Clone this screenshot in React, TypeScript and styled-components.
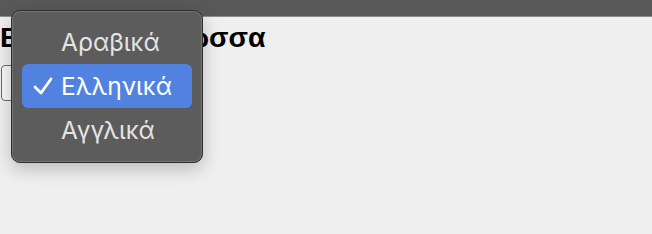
import React from 'react';
import styled, { createGlobalStyle } from 'styled-components';

const GlobalStyle = createGlobalStyle`
  html, body {
    margin: 0;
    padding: 0;
    background: #efefef;
    width: 652px;
    height: 234px;
    overflow: hidden;
  }
  * {
    box-sizing: border-box;
  }
`;

const Page = styled.div`
  position: relative;
  width: 652px;
  height: 234px;
  background: #efefef;
  font-family: "Liberation Sans", Arial, sans-serif;
`;

const TopBar = styled.div`
  height: 17px;
  background: #595959;
  border-bottom: 1px solid #8c8c8c;
`;

const Content = styled.div`
  display: flex;
  flex-direction: column;
  align-items: flex-start;
  padding: 0 0 0 1px;
`;

const Heading = styled.h1`
  margin: 3px 0 0 -1px;
  font-size: 28.5px;
  font-weight: 700;
  line-height: 34px;
  white-space: nowrap;
  color: #000;
`;

const SelectBox = styled.div`
  margin-top: 11px;
  width: 150px;
  height: 36px;
  border: 1px solid #6b6b6b;
  border-radius: 4px;
  background: #f7f7f7;
`;

const Menu = styled.div`
  position: absolute;
  left: 11px;
  top: 10px;
  width: 192px;
  padding: 9px 10px 10px;
  display: flex;
  flex-direction: column;
  background: #5c5c5c;
  border: 1px solid #2f2f2f;
  border-radius: 9px;
  box-shadow: inset 0 0 0 1px #737373, 0 6px 18px rgba(0, 0, 0, 0.22);
  font-family: Inter, "Noto Sans", sans-serif;
`;

const Item = styled.div<{ $active?: boolean }>`
  position: relative;
  height: 44px;
  display: flex;
  align-items: center;
  padding-left: 39px;
  border-radius: 6px;
  font-size: 24.5px;
  color: ${(p) => (p.$active ? '#ffffff' : '#e4e4e4')};
  background: ${(p) => (p.$active ? '#5282e0' : 'transparent')};
`;

const Check = styled.svg`
  position: absolute;
  left: 11px;
  top: 13px;
`;

const languages = ['Αραβικά', 'Ελληνικά', 'Αγγλικά'];

export default function App() {
  return (
    <Page>
      <GlobalStyle />
      <TopBar />
      <Content>
        <Heading>Επιθυμητή γλώσσα</Heading>
        <SelectBox />
      </Content>
      <Menu>
        {languages.map((lang) => (
          <Item key={lang} $active={lang === 'Ελληνικά'}>
            {lang === 'Ελληνικά' && (
              <Check width="20" height="18" viewBox="0 0 20 18">
                <polyline
                  points="2,10 8,16 18,2"
                  fill="none"
                  stroke="#fff"
                  strokeWidth="2.8"
                  strokeLinecap="round"
                  strokeLinejoin="round"
                />
              </Check>
            )}
            {lang}
          </Item>
        ))}
      </Menu>
    </Page>
  );
}
